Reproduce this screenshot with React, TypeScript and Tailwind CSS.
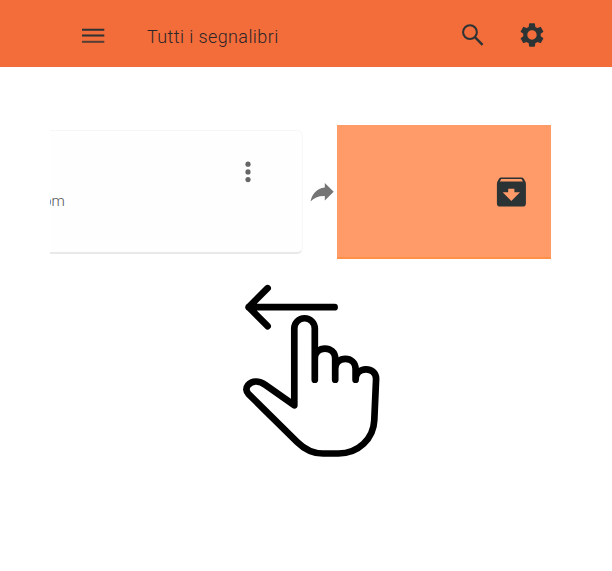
function Header() {
  return (
    <header className="flex h-[67px] items-start bg-[#f36d3b] pl-[82px] text-[#2c3335]">
      <svg className="mt-[28px] shrink-0" width="23" height="16" viewBox="0 0 23 16" fill="currentColor">
        <path d="M0 .7h22.3v2H0zM0 6.6h22.3v2H0z" />
        <path d="M0 12.8h22.3v2H0z" opacity=".8" />
      </svg>
      <h1 className="mt-[24px] ml-[42px] w-[311px] whitespace-nowrap font-[Roboto,sans-serif] text-[18px] leading-[25px] font-light tracking-[0.4px] text-[#2b2528]">
        Tutti i segnalibri
      </h1>
      <svg className="mt-[21px] ml-px shrink-0" width="28" height="28" viewBox="0 0 24 24" fill="none" stroke="currentColor" strokeWidth="1.75">
        <circle cx="9.4" cy="9.6" r="5.9" />
        <path d="M13.8 14L20.2 20.4" strokeWidth="2.1" />
      </svg>
      <svg className="mt-[21px] ml-[31px] shrink-0" width="28" height="28" viewBox="0 0 24 24" fill="currentColor">
        <path d="M19.43 12.98c.04-.32.07-.64.07-.98s-.03-.66-.07-.98l2.11-1.65c.19-.15.24-.42.12-.64l-2-3.46c-.12-.22-.39-.3-.61-.22l-2.49 1c-.52-.4-1.08-.73-1.69-.98l-.38-2.65A.488.488 0 0 0 14 2h-4c-.25 0-.46.18-.49.42l-.38 2.65c-.61.25-1.17.59-1.69.98l-2.49-1c-.23-.09-.49 0-.61.22l-2 3.46c-.13.22-.07.49.12.64l2.11 1.65c-.04.32-.07.65-.07.98s.03.66.07.98l-2.11 1.65c-.19.15-.24.42-.12.64l2 3.46c.12.22.39.3.61.22l2.49-1c.52.4 1.08.73 1.69.98l.38 2.65c.03.24.24.42.49.42h4c.25 0 .46-.18.49-.42l.38-2.65c.61-.25 1.17-.59 1.69-.98l2.49 1c.23.09.49 0 .61-.22l2-3.46c.12-.22.07-.49-.12-.64l-2.11-1.65zM12 16c-2.2 0-4-1.8-4-4s1.8-4 4-4 4 1.8 4 4-1.8 4-4 4z" />
      </svg>
    </header>
  );
}

function BookmarkCard() {
  return (
    <article className="mt-[5px] flex h-[124px] w-[253px] items-start justify-between overflow-hidden rounded-r-[6px] border-t border-r border-b-2 border-t-[#f7f7f7] border-r-[#f7f7f7] border-b-[#e9e9e9] bg-[#fefefe]">
      <div className="mt-[60px] flex w-[20px] justify-end overflow-hidden">
        <span className="mr-[4.8px] font-[Roboto,sans-serif] text-[15px] leading-[20px] font-light text-[#555]">om</span>
      </div>
      <svg className="mt-[30px] mr-[51px]" width="6" height="22" viewBox="0 0 6 22" fill="#666">
        <circle cx="3" cy="3.2" r="2.6" />
        <circle cx="3" cy="10.9" r="2.6" />
        <circle cx="3" cy="18.6" r="2.6" />
      </svg>
    </article>
  );
}

function SwipeGesture() {
  return (
    <svg
      className="mt-[23px] ml-[240px]"
      width="144"
      height="180"
      viewBox="240 282 144 180"
      fill="none"
      stroke="#000"
      strokeWidth="6.7"
      strokeLinecap="round"
      strokeLinejoin="round"
    >
      <path d="M334.6 307.2H248.7M267.6 288.2L248.7 307.2L267.6 326.2" />
      <path d="M314.8 379.7V328.5a10.25 10.25 0 0 0-20.5 0V405.3L265.5 384.9C259 380.2 252 380.4 248 385.2C245.6 388.2 246 391.5 248.6 394.1L297 441.8C304.5 449.3 313 453.5 323 453.5H338.5C358 453.5 373.6 439 374.3 420L376.1 378.8C376.1 366 355.6 366 355.6 379.7V369C355.6 355.5 335.2 355.5 335.2 369V379.7V358.7C335.2 345.2 314.8 345.2 314.8 358.7" />
    </svg>
  );
}

export default function App() {
  return (
    <main className="h-[571px] w-[612px] overflow-hidden bg-white">
      <Header />
      <section className="mt-[58px] flex h-[134px] items-start pl-[49.5px]">
        <BookmarkCard />
        <svg className="mt-[57px] ml-[7.5px] shrink-0" width="24" height="21" viewBox="310 182 24 21" fill="#757575">
          <path d="M324.8 183L333.7 191.7L324.8 200.5V195.9C318.5 195.7 314 197.6 310.5 201.6C311.8 194.5 316.5 188.2 324.8 187.5Z" />
        </svg>
        <div className="ml-[3.4px] flex h-[134px] w-[213.6px] items-center justify-end border-b-2 border-[#ff9048] bg-[#ff9b68] pt-[2px] pr-[20.5px]">
          <svg width="38" height="38" viewBox="492 173 38 38" fill="#2c3335">
            <path
              fillRule="evenodd"
              d="M501 177.6H521.5Q523 177.6 523.8 178.8L525.2 181.2Q525.9 182.4 525.9 184V203.5Q525.9 206.6 522.8 206.6H500Q496.9 206.6 496.9 203.5V184Q496.9 182.4 497.6 181.2L499 178.8Q499.7 177.6 501 177.6ZM501.2 178.9L499.8 181.6H523L521.4 178.9ZM508.2 188.7V192.2H502.7L511.3 201L520 192.2H514.4V188.7Z"
            />
          </svg>
        </div>
      </section>
      <SwipeGesture />
    </main>
  );
}
